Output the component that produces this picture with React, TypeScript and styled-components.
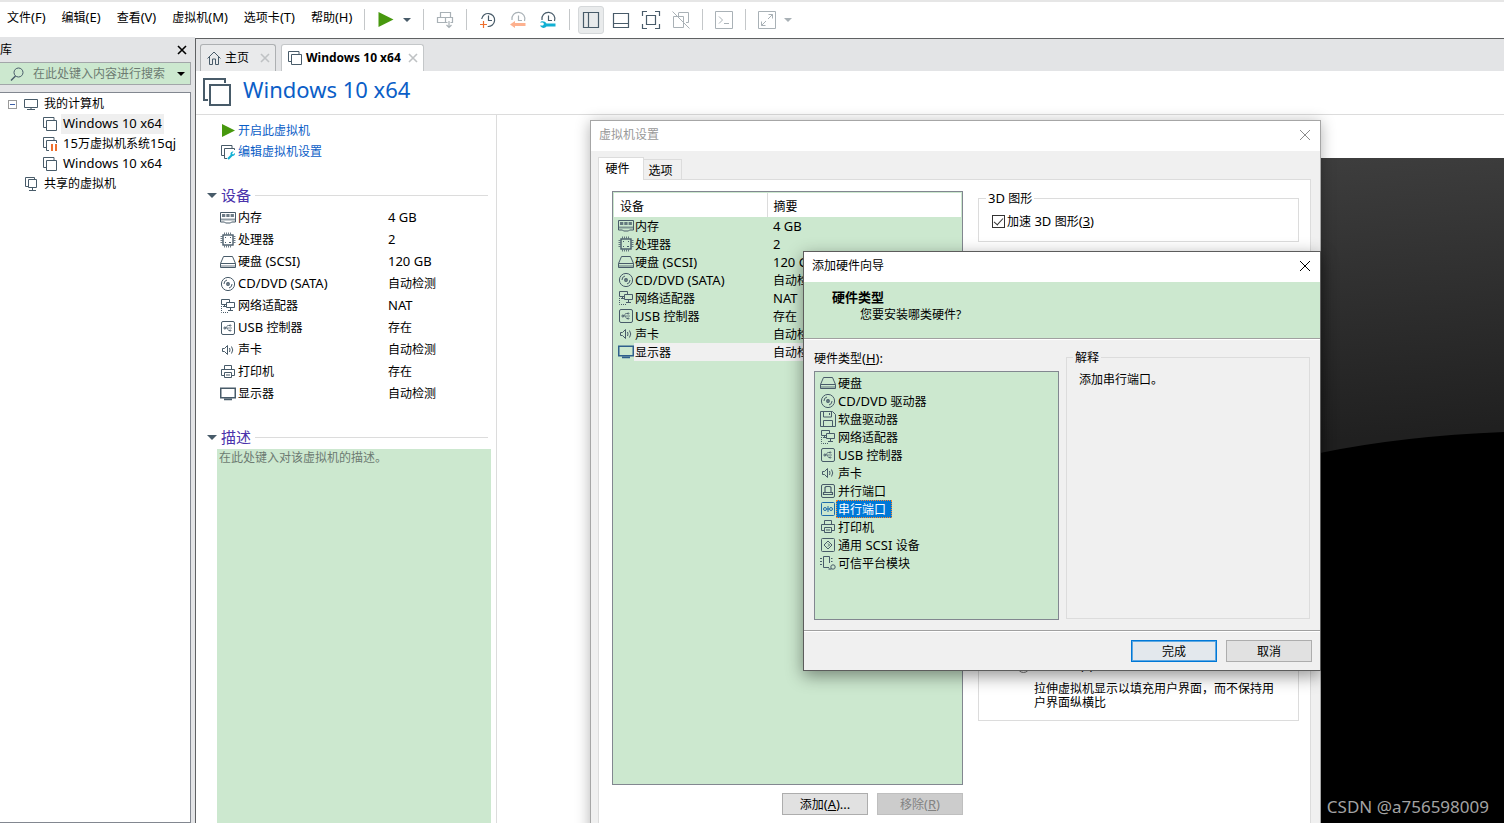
import React from "react";
import styled, { createGlobalStyle, css } from "styled-components";

const color = {
  green: "#cce8cf",
  icon: "#485b69",
  iconMuted: "#a9b1b6",
  link: "#0b5ec7",
  heading: "#4a33ab",
  strip: "#e3e4e6",
  face: "#f0f0f0",
  line: "#dcdcdc",
  frame: "#828790",
};

const GlobalStyle = createGlobalStyle`
  *, *::before, *::after { box-sizing: border-box; }
  body { margin: 0; }
  body, button, input, textarea, table {
    font-family: "Noto Sans", "Noto Sans CJK SC", sans-serif;
    font-size: 12px;
    line-height: 18px;
    color: #000;
  }
  button { padding: 0; border: 0; background: none; white-space: nowrap; }
  ul, dl, dd, h1, h2, h3, p { margin: 0; padding: 0; font-size: 12px; font-weight: normal; }
  ul { list-style: none; }
`;

/* ---------- text and icons ---------- */

const LatinRun = styled.span`
  font-size: 13px;
  line-height: 1;
`;

/* Latin letters are set one pixel larger than the Chinese ones beside them. */
function Mixed({ children }: { children: string }) {
  const parts = children.split(/([\x20-\x7e]+)/).filter(Boolean);
  return (
    <>
      {parts.map((part, i) =>
        /^[\x20-\x7e]+$/.test(part) ? <LatinRun key={i}>{part}</LatinRun> : part
      )}
    </>
  );
}

const Svg = styled.svg`
  display: block;
  flex: none;
  overflow: visible;
`;

const glyphs: Record<string, React.ReactNode> = {
  memory: (
    <>
      <path d="M.5 2.5h15v9.5h-4l-1 1h-5l-1-1h-4z" />
      <path d="M2 5.5h12" strokeWidth="3" strokeDasharray="3.3 1" strokeOpacity=".8" />
      <path d="M1 9.5h14" strokeWidth="2" strokeOpacity=".6" />
    </>
  ),
  cpu: (
    <>
      <rect x="3" y="3" width="10" height="10" strokeWidth="1.4" />
      <path d="M4.5.5v2M6.5.5v2M8.5.5v2M10.5.5v2M4.5 13.5v2M6.5 13.5v2M8.5 13.5v2M10.5 13.5v2M.5 4.5h2M.5 6.5h2M.5 8.5h2M.5 10.5h2M13.5 4.5h2M13.5 6.5h2M13.5 8.5h2M13.5 10.5h2" strokeOpacity=".8" />
      <path d="M5 5.5h1M10 5.5h1M5 10.5h1M9 10.5h2" />
    </>
  ),
  disk: (
    <>
      <path d="M3.5 2.5h9l3 7v4h-15v-4zM.5 9.5h15" />
      <path d="M1 12h14" strokeWidth="2" strokeOpacity=".4" />
    </>
  ),
  cd: (
    <>
      <circle cx="8" cy="8" r="6.6" />
      <circle cx="8" cy="8" r="1.2" strokeWidth="1.4" />
      <path d="M4 8a4 4 0 0 1 3-4M12 8a4 4 0 0 1-3 4" />
    </>
  ),
  floppy: (
    <>
      <path d="M.5.5h12l3 3v12h-15z" />
      <path d="M3.5 1v5h8V1M9.5 2v2M3.5 15V9.5h9V15" />
    </>
  ),
  net: (
    <>
      <path d="M6 6.5H1.5v-5h8V4M4.5 7v2M3 8.5h3" />
      <path d="M6.5 4.5h8v5h-8zM10.5 10v2M8 12.5h5" />
      <path d="M1.5 8v6.5H9" strokeDasharray="1 1" />
    </>
  ),
  usb: (
    <>
      <rect x="1.5" y="1.5" width="13" height="13" rx="1.5" />
      <path d="M4 8h8M6 8l1.5-2.5H10M7 8l1.5 2.5H10" strokeOpacity=".7" />
      <path d="M4 7v2h1.5V7zM9.5 5v1H11V5zM9.5 10v1H11v-1z" strokeOpacity=".7" />
    </>
  ),
  sound: (
    <>
      <path d="M2.5 6.5h2l3-3v9l-3-3h-2z" />
      <path d="M9.5 6q1 2 0 4M11.5 4.5q2.5 3.5 0 7" />
    </>
  ),
  printer: (
    <>
      <path d="M4.5 5V1.500h7V5M4 11.5H1.5v-6h13v6H12" />
      <path d="M4.5 8.5h7v5h-7zM6 11h4" />
    </>
  ),
  display: <path d="M.75 2.25h14.5v9.5H.75zM4 13.5h8" strokeWidth="1.5" />,
  parallel: (
    <>
      <rect x="1.5" y="1.5" width="13" height="13" rx="1.5" />
      <path d="M5 9.5V4.5l1-1h4l1 1v5M3.5 9.5h9v2h-9z" strokeWidth="1.2" />
    </>
  ),
  serial: (
    <>
      <rect x="1.5" y="1.5" width="13" height="13" rx="1" />
      <circle cx="5" cy="8" r="1.5" />
      <circle cx="11" cy="8" r="1.5" />
      <path d="M8 5v6M7 8h2" />
    </>
  ),
  scsi: (
    <>
      <rect x="1.5" y="1.5" width="13" height="13" rx="1" />
      <path d="M8 4l4 4-4 4-4-4zM8 6.5L9.500 8 8 9.5" />
    </>
  ),
  tpm: (
    <>
      <path d="M9.5 8V1.500h-6v11H9M0 3.500h2M0 6.500h2M0 9.500h2M11 3.500h1.500M11 6.500h1.500" />
      <circle cx="13" cy="12" r="2.2" />
      <path d="M8.5 14h3" strokeWidth="2" strokeOpacity=".6" />
    </>
  ),
  vm: <path d="M4 11.5H1.5v-10H12V4M4.5 4.5h10v10h-10z" />,
  vmPaused: (
    <>
      <path d="M4 11.5H1.5v-10H12V4M7 14.5H4.5v-10h10V7" />
      <path d="M10 8v7M14 8v7" stroke="#ee6f2d" strokeWidth="2" />
    </>
  ),
  vmEdit: (
    <>
      <path d="M4 11.5H1.5v-10H12V4M7 14.5H4.5v-10h10V6" />
      <path d="M8 15l4-4" stroke="#12b0d3" strokeWidth="2.2" />
      <path d="M15 9l-2 1.500-1-1L13.500 7.500a2.500 2.500 0 0 0-3 3l1.500 1.500a2.500 2.500 0 0 0 3-3z" fill="#12b0d3" stroke="none" />
    </>
  ),
  play: <path d="M2 1l13 6.500L2 14z" fill="#47980e" stroke="none" />,
  computer: <path d="M1.5 3.5h13v8h-13zM4 13.5h8M8 12v2" />,
  shared: <path d="M5 10.5H2.5v-9h9V3M5.5 3.5h8v8h-8zM9.5 12v2M6 14.5h7" />,
  home: <path d="M1.5 8.5L8 2l6.500 6.500M3.500 7v7.500h3V9h3v5.500h3V7" />,
  search: (
    <>
      <circle cx="9.5" cy="6.5" r="4.5" />
      <path d="M6.5 10L2 14.500" strokeWidth="1.5" />
    </>
  ),
};

function Icon({ name, size = 16, stroke = color.icon }: { name: string; size?: number; stroke?: string }) {
  return (
    <Svg width={size} height={size} viewBox="0 0 16 16" fill="none" stroke={stroke} aria-hidden="true">
      {glyphs[name]}
    </Svg>
  );
}

const Caret = styled.span<{ $tone?: string; $size?: number }>`
  flex: none;
  width: 0;
  height: 0;
  border: ${(p) => p.$size ?? 4}px solid transparent;
  border-top-color: ${(p) => p.$tone ?? color.icon};
  border-bottom: 0;
`;

function Cross({ size = 10, stroke = "#000", weight = 1 }: { size?: number; stroke?: string; weight?: number }) {
  return (
    <Svg width={size} height={size} viewBox="0 0 10 10" fill="none" stroke={stroke} strokeWidth={weight} aria-hidden="true">
      <path d="M0 0l10 10M10 0L0 10" />
    </Svg>
  );
}

/* ---------- window shell and tool bar ---------- */

const Shell = styled.div`
  position: relative;
  display: flex;
  flex-direction: column;
  height: 100vh;
  overflow: hidden;
  background: #fff;
`;

const TopBar = styled.header`
  display: flex;
  align-items: center;
  flex: none;
  height: 37px;
  border-top: 2px solid #e6e6e6;
`;

const Menu = styled.nav`
  display: flex;
  gap: 16px;
  width: 358px;
  flex: none;
  padding: 0 0 3px 7px;
`;

const Separator = styled.span`
  flex: none;
  width: 1px;
  height: 21px;
  margin: 0 6px;
  background: #c4c7c9;
`;

const ToolButton = styled.button`
  display: flex;
  align-items: center;
  justify-content: center;
  flex: none;
  width: 30px;
  height: 28px;
`;

const PressedFace = styled.span`
  display: flex;
  align-items: center;
  justify-content: center;
  width: 26px;
  height: 28px;
  border: 1px solid #d5d8da;
  border-radius: 3px;
  background: #e9ebec;
`;

const CaretButton = styled.button`
  display: flex;
  align-items: center;
  width: 16px;
  height: 28px;
  padding-left: 2px;
`;

const toolGlyphs: Record<string, React.ReactNode> = {
  send: (
    <g stroke={color.iconMuted} strokeWidth="1.2">
      <path d="M4.5 1.5h10v5h-10zM1.5 6.500h8v5h-8zM9.500 6.500h7v5h-2M9.500 11.500h2M13 10v6M10.500 14l2.500 2.500 2.500-2.500" />
    </g>
  ),
  snapshot: (
    <>
      <path d="M2.700 8a6.500 6.500 0 1 1 6 7.500M9.500 4.500v5H13" strokeWidth="1.2" />
      <path d="M4.5 10v7M1 13.500h7" stroke="#ee6f2d" strokeWidth="1.2" />
    </>
  ),
  revert: (
    <>
      <path d="M3 9a6.500 6.500 0 1 1 12.500 1M9.500 4.500v5H13" stroke={color.iconMuted} strokeWidth="1.2" />
      <path d="M1 13.500l5-3.500v2h10.500v3H6v2z" fill="#fdb18f" stroke="none" />
    </>
  ),
  manage: (
    <>
      <path d="M3 9a6.500 6.500 0 1 1 12.500 1M9.500 4.500v5H13" strokeWidth="1.2" />
      <path d="M1 11.500h3l1 1.500-1 1.500H1c1.500 3 5 3 6.500 1h9v-3h-9c-1.500-2.500-5-3-6.500-1z" fill="#12b0d3" stroke="none" />
    </>
  ),
  sidebar: <path d="M1.5 1.5h15v15h-15zM6.5 2v14" strokeWidth="1.2" />,
  bottom: <path d="M1.5 2.5h15v14h-15zM2 12.500h14" strokeWidth="1.2" />,
  full: (
    <path d="M.5 5V.5H5M13 .5h4.500V5M17.500 13v4.500H13M5 17.500H.5V13M4.500 4.500h9v9h-9z" strokeWidth="1.2" />
  ),
  unity: (
    <path d="M7 1.500h9.500v10H14M11.500 5.500h-10v11h10zM.5.5l17 17M6.500 5v-3.500" stroke={color.iconMuted} />
  ),
  console: <path d="M.5.5h17v17H.5zM4 5.500l3.500 3.500L4 12.500M9 12.500h5" stroke={color.iconMuted} />,
  expand: (
    <path d="M.5.5h17v17H.5zM10.500 3.500h4v4M7.500 14.500h-4v-4M14.500 3.500l-4.500 4.500M3.500 14.500l4.500-4.500" stroke={color.iconMuted} />
  ),
};

function ToolIcon({ name }: { name: string }) {
  return (
    <Svg width={18} height={18} viewBox="0 0 18 18" fill="none" stroke={color.icon} aria-hidden="true">
      {toolGlyphs[name]}
    </Svg>
  );
}

function Tool({ name, label }: { name: string; label: string }) {
  return (
    <ToolButton aria-label={label}>
      <ToolIcon name={name} />
    </ToolButton>
  );
}

/* ---------- library side bar ---------- */

const Workspace = styled.div`
  display: flex;
  flex: 1;
  min-height: 0;
`;

const Library = styled.aside`
  display: flex;
  flex-direction: column;
  flex: none;
  width: 195px;
  padding-right: 4px;
  background: ${color.strip};
`;

const LibraryHead = styled.div`
  display: flex;
  align-items: center;
  justify-content: space-between;
  height: 25px;
  padding-right: 5px;
`;

const SearchBox = styled.label`
  display: flex;
  align-items: center;
  gap: 8px;
  height: 23px;
  padding: 0 5px 0 9px;
  border: 1px solid #a2a6a9;
  border-left: 0;
  background: ${color.green};
`;

const SearchInput = styled.input`
  flex: 1;
  min-width: 0;
  padding: 0;
  border: 0;
  outline: 0;
  background: transparent;
  &::placeholder { color: #6d7b72; opacity: 1; }
`;

const Tree = styled.ul`
  flex: 1;
  margin-top: 7px;
  padding-top: 1px;
  border: 1px solid ${color.frame};
  border-left: 0;
  background: #fff;
`;

const TreeRow = styled.li<{ $depth: number }>`
  display: flex;
  align-items: center;
  gap: 5px;
  height: 20px;
  padding-left: ${(p) => [8, 23, 42][p.$depth]}px;
  white-space: nowrap;
`;

const TreeLabel = styled.span<{ $active?: boolean }>`
  padding: 1px 2px 1px 0;
  ${(p) => p.$active && css`box-shadow: -2px 0 0 #efefef; background: #efefef;`}
`;

const Expander = styled.button`
  display: flex;
  align-items: center;
  justify-content: center;
  width: 9px;
  height: 9px;
  margin-right: 1px;
  border: 1px solid #9a9a9a;
  &::before { content: ""; width: 5px; height: 1px; background: #3c5fa8; }
`;

/* ---------- document area ---------- */

const Document = styled.main`
  display: flex;
  flex: 1;
  flex-direction: column;
  min-width: 0;
  margin-top: 1px;
  border-top: 1px solid #5f6163;
  border-left: 1px solid #5f6163;
`;

const TabStrip = styled.div`
  display: flex;
  align-items: flex-end;
  flex: none;
  gap: 5px;
  height: 32px;
  padding-left: 4px;
  background: ${color.strip};
`;

const DocTab = styled.div<{ $active?: boolean }>`
  display: flex;
  align-items: center;
  gap: 3px;
  height: 27px;
  padding: 0 6px 0 5px;
  border: 1px solid #adb0b2;
  border-bottom: 0;
  border-radius: 3px 3px 0 0;
  background: ${(p) => (p.$active ? "#fff" : "#e9eaeb")};
  ${(p) => p.$active && css`font-weight: bold; border-color: #c4c7c9;`}
`;

const TabClose = styled.button<{ $near?: boolean }>`
  margin-left: ${(p) => (p.$near ? 5 : 9)}px;
`;

const TitleBar = styled.div`
  display: flex;
  align-items: center;
  flex: none;
  gap: 11px;
  height: 44px;
  padding-left: 7px;
  border-bottom: 1px solid ${color.line};
`;

const Title = styled.h1`
  padding-bottom: 8px;
  font-size: 22px;
  line-height: 30px;
  color: ${color.link};
`;

const Columns = styled.div`
  display: flex;
  flex: 1;
  min-height: 0;
`;

const Details = styled.section`
  display: flex;
  flex-direction: column;
  flex: none;
  width: 301px;
  padding: 5px 5px 0 11px;
  border-right: 1px solid ${color.line};
`;

const ActionLink = styled.a`
  display: flex;
  align-items: center;
  gap: 2px;
  height: 21px;
  padding-left: 13px;
  color: ${color.link};
  text-decoration: none;
`;

const SectionHead = styled.h2`
  display: flex;
  align-items: center;
  gap: 4px;
  height: 22px;
  margin: 22px 3px 0 0;
  font-size: 15px;
  line-height: 22px;
  color: ${color.heading};
  &::after { content: ""; flex: 1; height: 1px; background: ${color.line}; }
`;

const DeviceList = styled.dl`
  padding-left: 13px;
`;

const DeviceRow = styled.div`
  display: grid;
  grid-template-columns: 16px 148px 1fr;
  align-items: center;
  column-gap: 2px;
  height: 22px;
  padding-top: 1px;
`;

const Description = styled.textarea`
  flex: 1;
  margin: 1px 0 0 10px;
  padding: 0 2px;
  border: 0;
  outline: 0;
  resize: none;
  background: ${color.green};
  &::placeholder { color: #6d7b72; opacity: 1; }
`;

const Preview = styled.section`
  display: flex;
  flex: 1;
  min-width: 0;
  padding: 43px 0 0 240px;
`;

const Screen = styled.div`
  flex: 1;
  min-width: 0;
  overflow: hidden;
  background: #000;
`;

const Watermark = styled.p`
  position: absolute;
  right: 15px;
  bottom: 4px;
  font-size: 17px;
  line-height: 24px;
  color: #a3a3a3;
`;

/* ---------- dialogs ---------- */

const Dialog = styled.section`
  position: absolute;
  display: flex;
  flex-direction: column;
  background: ${color.face};
`;

const SettingsDialog = styled(Dialog)`
  left: 590px;
  top: 120px;
  width: 731px;
  height: 740px;
  border: 1px solid #a6a6a6;
  box-shadow: 0 2px 14px rgba(0, 0, 0, 0.3);
`;

const WizardDialog = styled(Dialog)`
  left: 803px;
  top: 251px;
  width: 518px;
  height: 420px;
  border: 1px solid #5c5c5c;
  box-shadow: 0 5px 16px rgba(0, 0, 0, 0.42);
`;

const DialogTitle = styled.div<{ $inactive?: boolean }>`
  display: flex;
  align-items: center;
  justify-content: space-between;
  flex: none;
  height: 30px;
  padding: 0 10px 2px 8px;
  background: #fff;
  h2 { color: ${(p) => (p.$inactive ? "#999" : "#000")}; }
`;

const DialogTabs = styled.div`
  display: flex;
  align-items: flex-end;
  flex: none;
  height: 28px;
  padding-left: 7px;
`;

const DialogTab = styled.button<{ $active?: boolean }>`
  width: ${(p) => (p.$active ? 46 : 38)}px;
  height: ${(p) => (p.$active ? 22 : 20)}px;
  border: 1px solid ${color.line};
  border-bottom: 0;
  ${(p) =>
    p.$active
      ? css`
          z-index: 1;
          height: 23px;
          margin-bottom: -1px;
          padding-right: 7px;
          background: #fff;
        `
      : css`
          padding: 2px 4px 0 0;
          border-left: 0;
        `}
`;

const TabPanel = styled.div`
  display: flex;
  flex: 1;
  gap: 15px;
  margin: 0 9px 0 7px;
  padding: 0 11px 0 13px;
  border: 1px solid ${color.line};
  background: #fff;
`;

const ListColumn = styled.div`
  width: 351px;
  padding-top: 11px;
`;

const ListFrame = styled.div`
  height: 594px;
  padding: 1px;
  border: 1px solid ${color.frame};
  background: ${color.green};
`;

const HardwareTable = styled.table`
  width: 100%;
  border-collapse: collapse;
  table-layout: fixed;
  th {
    width: 153px;
    height: 24px;
    padding: 3px 0 0 6px;
    background: #fff;
    font-weight: normal;
    text-align: left;
  }
  th + th { width: auto; border-left: 1px solid ${color.line}; }
  td { height: 18px; padding: 0 0 0 4px; white-space: nowrap; }
  td + td { padding-left: 6px; }
`;

const TableRow = styled.tr<{ $active?: boolean }>`
  ${(p) => p.$active && css`background: linear-gradient(90deg, ${color.green} 20px, ${color.face} 20px);`}
`;

const CellLine = styled.span`
  display: flex;
  align-items: center;
  gap: 1px;
  height: 18px;
`;

const CellText = styled.span`
  padding-top: 2px;
`;

const ButtonRow = styled.div`
  display: flex;
  justify-content: flex-end;
  gap: 9px;
`;

const ListButtons = styled(ButtonRow)`
  padding-top: 8px;
`;

const PushButton = styled.button<{ $primary?: boolean }>`
  width: 86px;
  height: 22px;
  padding-top: 2px;
  border: 1px solid #adadad;
  background: #e1e1e1;
  ${(p) =>
    p.$primary &&
    css`
      border-color: #0078d7;
      box-shadow: inset 0 0 0 1px #5ea8e2;
      background: #e3e8ed;
    `}
  &:disabled { border-color: #bfbfbf; background: #ccc; color: #838383; }
`;

const OptionsColumn = styled.div`
  flex: 1;
  padding-top: 9px;
`;

const Group = styled.fieldset`
  min-width: 0;
  margin: 0;
  padding: 0 12px;
  border: 1px solid ${color.line};
  legend { height: 18px; margin-left: -6px; padding: 1px 2px 0; }
`;

const AccelGroup = styled(Group)`
  height: 53px;
  padding: 4px 13px;
`;

const DisplayGroup = styled(Group)`
  display: flex;
  flex-direction: column;
  justify-content: flex-end;
  height: 467px;
  margin-top: 12px;
  padding: 0 22px 10px 38px;
`;

const CheckLabel = styled.label`
  display: flex;
  align-items: center;
  gap: 2px;
`;

const CheckBox = styled.input`
  appearance: none;
  display: flex;
  justify-content: center;
  width: 13px;
  height: 13px;
  margin: 0;
  border: 1px solid #333;
  background: #fff;
  &:checked::after {
    content: "";
    width: 5px;
    height: 9px;
    border: solid #333;
    border-width: 0 1px 1px 0;
    transform: rotate(42deg);
  }
`;

const RadioInput = styled.input`
  width: 13px;
  height: 13px;
  margin: 0;
`;

const Hint = styled.p`
  padding: 7px 0 0 17px;
  line-height: 14px;
`;

const WizardHead = styled.div`
  flex: none;
  height: 57px;
  padding: 6px 28px;
  border-bottom: 1px solid #a0a0a0;
  background: ${color.green};
  h3 { font-weight: bold; font-size: 13px; }
  p { padding-left: 28px; }
`;

const WizardBody = styled.div`
  display: flex;
  flex: 1;
  gap: 7px;
  padding: 8px 10px 0;
  border-top: 1px solid #fff;
`;

const TypeColumn = styled.div`
  width: 245px;
  padding-top: 2px;
`;

const TypeList = styled.ul`
  height: 249px;
  margin-top: 3px;
  padding: 2px 5px;
  border: 1px solid ${color.frame};
  background: ${color.green};
`;

const TypeItem = styled.li`
  display: flex;
  align-items: center;
  height: 18px;
`;

const TypeName = styled.span<{ $selected?: boolean }>`
  height: 18px;
  padding: 0 1px;
  border: 1px solid transparent;
  line-height: 17px;
  ${(p) =>
    p.$selected &&
    css`
      padding-right: 5px;
      border: 1px dotted #ff8728;
      background: #0078d7;
      color: #fff;
    `}
`;

const ExplainGroup = styled(Group)`
  flex: 1;
  height: 271px;
  p { padding-top: 5px; }
`;

const WizardFoot = styled(ButtonRow)`
  flex: none;
  height: 40px;
  padding: 9px 8px 0;
  border-top: 1px solid #a0a0a0;
  box-shadow: inset 0 1px 0 #fff;
`;

/* ---------- data ---------- */

const menus = ["文件(F)", "编辑(E)", "查看(V)", "虚拟机(M)", "选项卡(T)", "帮助(H)"];

const hardware = [
  { icon: "memory", name: "内存", value: "4 GB" },
  { icon: "cpu", name: "处理器", value: "2" },
  { icon: "disk", name: "硬盘 (SCSI)", value: "120 GB" },
  { icon: "cd", name: "CD/DVD (SATA)", value: "自动检测" },
  { icon: "net", name: "网络适配器", value: "NAT" },
  { icon: "usb", name: "USB 控制器", value: "存在" },
  { icon: "sound", name: "声卡", value: "自动检测" },
  { icon: "printer", name: "打印机", value: "存在" },
  { icon: "display", name: "显示器", value: "自动检测" },
];

const hardwareTypes = [
  { icon: "disk", name: "硬盘" },
  { icon: "cd", name: "CD/DVD 驱动器" },
  { icon: "floppy", name: "软盘驱动器" },
  { icon: "net", name: "网络适配器" },
  { icon: "usb", name: "USB 控制器" },
  { icon: "sound", name: "声卡" },
  { icon: "parallel", name: "并行端口" },
  { icon: "serial", name: "串行端口" },
  { icon: "printer", name: "打印机" },
  { icon: "scsi", name: "通用 SCSI 设备" },
  { icon: "tpm", name: "可信平台模块" },
];

/* ---------- parts ---------- */

function MainBar() {
  return (
    <TopBar>
      <Menu>
        {menus.map((m) => (
          <button key={m}><Mixed>{m}</Mixed></button>
        ))}
      </Menu>
      <Separator />
      <ToolButton aria-label="开启">
        <Svg width={16} height={16} viewBox="0 0 16 16" aria-hidden="true">
          <path d="M.5 0L15.5 7.5 .5 15z" fill="#47980e" />
        </Svg>
      </ToolButton>
      <CaretButton aria-label="电源选项">
        <Caret />
      </CaretButton>
      <Separator />
      <Tool name="send" label="发送" />
      <Separator />
      <Tool name="snapshot" label="拍摄快照" />
      <Tool name="revert" label="恢复快照" />
      <Tool name="manage" label="管理快照" />
      <Separator />
      <ToolButton aria-label="显示库" aria-pressed="true">
        <PressedFace>
          <ToolIcon name="sidebar" />
        </PressedFace>
      </ToolButton>
      <Tool name="bottom" label="缩略图栏" />
      <Tool name="full" label="全屏" />
      <Tool name="unity" label="Unity" />
      <Separator />
      <Tool name="console" label="控制台" />
      <Separator />
      <Tool name="expand" label="拉伸" />
      <CaretButton aria-label="拉伸选项">
        <Caret $tone={color.iconMuted} />
      </CaretButton>
    </TopBar>
  );
}

function LibraryPane() {
  return (
    <Library>
      <LibraryHead>
        <span>库</span>
        <button aria-label="关闭库">
          <Cross size={8} weight={2} />
        </button>
      </LibraryHead>
      <SearchBox>
        <Icon name="search" />
        <SearchInput aria-label="搜索" placeholder="在此处键入内容进行搜索" />
        <Caret $tone="#000" />
      </SearchBox>
      <Tree>
        <TreeRow $depth={0}>
          <Expander aria-label="折叠" />
          <Icon name="computer" />
          <TreeLabel>我的计算机</TreeLabel>
        </TreeRow>
        <TreeRow $depth={2}>
          <Icon name="vm" />
          <TreeLabel $active><Mixed>Windows 10 x64</Mixed></TreeLabel>
        </TreeRow>
        <TreeRow $depth={2}>
          <Icon name="vmPaused" />
          <TreeLabel><Mixed>15万虚拟机系统15qj</Mixed></TreeLabel>
        </TreeRow>
        <TreeRow $depth={2}>
          <Icon name="vm" />
          <TreeLabel><Mixed>Windows 10 x64</Mixed></TreeLabel>
        </TreeRow>
        <TreeRow $depth={1}>
          <Icon name="shared" />
          <TreeLabel>共享的虚拟机</TreeLabel>
        </TreeRow>
      </Tree>
    </Library>
  );
}

function DetailsPane() {
  return (
    <Details>
      <ActionLink href="#power">
        <Icon name="play" />
        开启此虚拟机
      </ActionLink>
      <ActionLink href="#edit">
        <Icon name="vmEdit" />
        编辑虚拟机设置
      </ActionLink>
      <SectionHead>
        <Caret $size={5} />
        设备
      </SectionHead>
      <DeviceList>
        {hardware.map((d) => (
          <DeviceRow key={d.name}>
            <Icon name={d.icon} />
            <dt><Mixed>{d.name}</Mixed></dt>
            <dd><Mixed>{d.value}</Mixed></dd>
          </DeviceRow>
        ))}
      </DeviceList>
      <SectionHead>
        <Caret $size={5} />
        描述
      </SectionHead>
      <Description aria-label="描述" placeholder="在此处键入对该虚拟机的描述。" />
    </Details>
  );
}

function ScreenPreview() {
  return (
    <Preview>
      <Screen>
        <Svg width="100%" height="100%" viewBox="0 0 767 665" preserveAspectRatio="xMaxYMin slice" aria-hidden="true">
          <defs>
            <linearGradient id="glow" x1="0" y1="0" x2="0.12" y2="1">
              <stop offset="0" stopColor="#424242" />
              <stop offset="0.65" stopColor="#202020" />
            </linearGradient>
          </defs>
          <path d="M0 0h767v274Q665 278 583 295Q360 341 0 500z" fill="url(#glow)" />
        </Svg>
      </Screen>
    </Preview>
  );
}

function Settings() {
  const rows = hardware.filter((d) => d.icon !== "printer");
  return (
    <SettingsDialog role="dialog" aria-label="虚拟机设置">
      <DialogTitle $inactive>
        <h2>虚拟机设置</h2>
        <button aria-label="关闭">
          <Cross stroke="#8c8c8c" />
        </button>
      </DialogTitle>
      <DialogTabs role="tablist">
        <DialogTab role="tab" aria-selected="true" $active>硬件</DialogTab>
        <DialogTab role="tab" aria-selected="false">选项</DialogTab>
      </DialogTabs>
      <TabPanel>
        <ListColumn>
          <ListFrame>
            <HardwareTable>
              <thead>
                <tr>
                  <th>设备</th>
                  <th>摘要</th>
                </tr>
              </thead>
              <tbody>
                {rows.map((d) => (
                  <TableRow key={d.name} $active={d.icon === "display"}>
                    <td>
                      <CellLine>
                        <Icon name={d.icon} stroke={d.icon === "display" ? "#2f5f8c" : color.icon} />
                        <CellText><Mixed>{d.name}</Mixed></CellText>
                      </CellLine>
                    </td>
                    <td>
                      <CellLine>
                        <CellText><Mixed>{d.value}</Mixed></CellText>
                      </CellLine>
                    </td>
                  </TableRow>
                ))}
              </tbody>
            </HardwareTable>
          </ListFrame>
          <ListButtons>
            <PushButton><Mixed>添加(</Mixed><u><Mixed>A</Mixed></u><Mixed>)...</Mixed></PushButton>
            <PushButton disabled><Mixed>移除(</Mixed><u><Mixed>R</Mixed></u><Mixed>)</Mixed></PushButton>
          </ListButtons>
        </ListColumn>
        <OptionsColumn>
          <AccelGroup>
            <legend><Mixed>3D 图形</Mixed></legend>
            <CheckLabel>
              <CheckBox type="checkbox" defaultChecked />
              <CellText><Mixed>加速 3D 图形(</Mixed><u><Mixed>3</Mixed></u><Mixed>)</Mixed></CellText>
            </CheckLabel>
          </AccelGroup>
          <DisplayGroup>
            <CheckLabel>
              <RadioInput type="radio" name="stretch" />
              自由拉伸(F)
            </CheckLabel>
            <Hint>拉伸虚拟机显示以填充用户界面，而不保持用户界面纵横比</Hint>
          </DisplayGroup>
        </OptionsColumn>
      </TabPanel>
    </SettingsDialog>
  );
}

function Wizard() {
  return (
    <WizardDialog role="dialog" aria-label="添加硬件向导">
      <DialogTitle>
        <h2>添加硬件向导</h2>
        <button aria-label="关闭">
          <Cross />
        </button>
      </DialogTitle>
      <WizardHead>
        <h3>硬件类型</h3>
        <p>您要安装哪类硬件?</p>
      </WizardHead>
      <WizardBody>
        <TypeColumn>
          <div id="type-label"><Mixed>硬件类型(</Mixed><u><Mixed>H</Mixed></u><Mixed>):</Mixed></div>
          <TypeList role="listbox" aria-labelledby="type-label">
            {hardwareTypes.map((t) => {
              const selected = t.icon === "serial";
              return (
                <TypeItem key={t.name} role="option" aria-selected={selected}>
                  <Icon name={t.icon} stroke={selected ? "#1f6cab" : color.icon} />
                  <TypeName $selected={selected}><Mixed>{t.name}</Mixed></TypeName>
                </TypeItem>
              );
            })}
          </TypeList>
        </TypeColumn>
        <ExplainGroup>
          <legend>解释</legend>
          <p>添加串行端口。</p>
        </ExplainGroup>
      </WizardBody>
      <WizardFoot>
        <PushButton $primary>完成</PushButton>
        <PushButton>取消</PushButton>
      </WizardFoot>
    </WizardDialog>
  );
}

export default function App() {
  return (
    <Shell>
      <GlobalStyle />
      <MainBar />
      <Workspace>
        <LibraryPane />
        <Document>
          <TabStrip>
            <DocTab>
              <Icon name="home" />
              主页
              <TabClose aria-label="关闭主页">
                <Cross size={8} stroke="#bfc2c4" weight={2} />
              </TabClose>
            </DocTab>
            <DocTab $active>
              <Icon name="vm" />
              Windows 10 x64
              <TabClose $near aria-label="关闭 Windows 10 x64">
                <Cross size={8} stroke="#bfc2c4" weight={2} />
              </TabClose>
            </DocTab>
          </TabStrip>
          <TitleBar>
            <Svg width={29} height={29} viewBox="0 0 29 29" fill="none" stroke={color.icon} strokeWidth={2} aria-hidden="true">
              <path d="M5 22H1V1h21v4M7 7h20v20H7z" />
            </Svg>
            <Title>Windows 10 x64</Title>
          </TitleBar>
          <Columns>
            <DetailsPane />
            <ScreenPreview />
          </Columns>
        </Document>
      </Workspace>
      <Settings />
      <Wizard />
      <Watermark>CSDN @a756598009</Watermark>
    </Shell>
  );
}
